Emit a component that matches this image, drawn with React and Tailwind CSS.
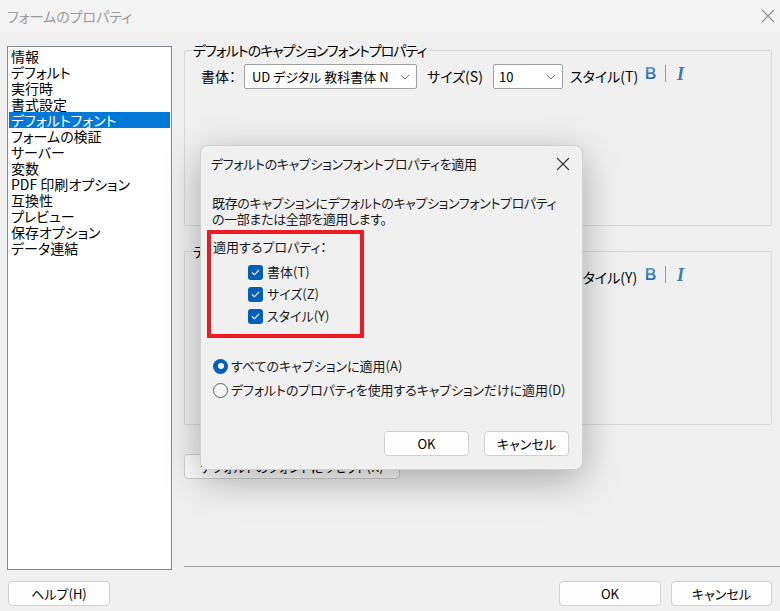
import React from "react";

const jp = { fontFamily: '"Noto Sans CJK JP", "Noto Sans", sans-serif', fontFeatureSettings: '"palt"' };

const listItems = [
  "情報",
  "デフォルト",
  "実行時",
  "書式設定",
  "デフォルトフォント",
  "フォームの検証",
  "サーバー",
  "変数",
  "PDF 印刷オプション",
  "互換性",
  "プレビュー",
  "保存オプション",
  "データ連結",
];

function Chevron() {
  return (
    <svg width="10" height="6" viewBox="0 0 10 6" className="shrink-0">
      <path d="M1 1l4 4 4-4" fill="none" stroke="#6b6b6b" strokeWidth="1" />
    </svg>
  );
}

function StyleButtons() {
  return (
    <div className="flex items-center -mt-[6px]">
      <span
        className="w-[13px] text-[16px] leading-none font-black bg-gradient-to-b from-[#5b9bd8] to-[#1f5fa8] bg-clip-text text-transparent"
        style={{ fontFamily: '"Liberation Sans", sans-serif' }}
      >
        B
      </span>
      <span className="ml-[7px] w-px h-[17px] bg-[#9a9a9a] shrink-0" />
      <span className="ml-[11px] text-[18px] leading-none font-bold italic text-[#3a78bd]" style={{ fontFamily: '"Liberation Serif", serif' }}>
        I
      </span>
    </div>
  );
}

function FontRow({ sizeLabel, styleLabel }) {
  return (
    <div className="flex items-center h-[25px] mt-[13px] pl-[16px] text-[14px] whitespace-nowrap">
      <span className="w-[43px] shrink-0">書体：</span>
      <div className="w-[173px] h-[25px] bg-white border border-[#a0a0a0] rounded-[2px] flex items-center justify-between pl-[7px] pr-[6px] shrink-0">
        <span className="text-[13px]">UD デジタル 教科書体 N</span>
        <Chevron />
      </div>
      <span className="ml-[10px] w-[66px] shrink-0">{sizeLabel}</span>
      <div className="w-[70px] h-[25px] bg-white border border-[#a0a0a0] rounded-[2px] flex items-center justify-between pl-[5px] pr-[6px] shrink-0">
        <span className="text-[13px]">10</span>
        <Chevron />
      </div>
      <span className="ml-[7px] w-[75px] shrink-0">{styleLabel}</span>
      <StyleButtons />
    </div>
  );
}

function GroupBox({ title, children, className }) {
  return (
    <div className={`relative border border-[#d9d9d9] rounded-[2px] mr-[8px] ${className}`}>
      <span className="absolute -top-[10px] left-[7px] px-[1px] bg-[#f0f0f0] text-[14px] leading-[18px] tracking-[-1px] whitespace-nowrap">
        {title}
      </span>
      {children}
    </div>
  );
}

function WinButton({ children, className = "" }) {
  return (
    <button className={`h-[25px] bg-[#fdfdfd] border border-[#d0d0d0] rounded-[4px] text-[13px] text-black flex items-center justify-center whitespace-nowrap ${className}`}>
      {children}
    </button>
  );
}

function CheckRow({ label }) {
  return (
    <div className="flex items-center h-[22px] pl-[37px]">
      <span className="w-[15px] h-[15px] rounded-[3px] bg-[#005fb8] flex items-center justify-center shrink-0">
        <svg width="9" height="7" viewBox="0 0 9 7">
          <path d="M1 3.5l2.4 2.3L8 1" fill="none" stroke="white" strokeWidth="1.1" />
        </svg>
      </span>
      <span className="ml-[4px]">{label}</span>
    </div>
  );
}

function ApplyDialog() {
  return (
    <div className="absolute left-[200px] top-[145px] w-[383px] h-[325px] rounded-[8px] bg-[#f0f0f0] border border-[#cfcfcf] shadow-[0_10px_40px_rgba(0,0,0,0.3)] text-[13px] text-[#1a1a1a] whitespace-nowrap">
      <div className="flex items-center justify-between h-[36px] pl-[10px] pr-[12px]">
        <span className="tracking-[-0.35px]">デフォルトのキャプションフォントプロパティを適用</span>
        <svg width="14" height="14" viewBox="0 0 14 14">
          <path d="M1 1l12 12M13 1L1 13" stroke="#333" strokeWidth="1.1" />
        </svg>
      </div>
      <div className="mt-[13px] pl-[11px] leading-[16px] tracking-[-0.35px]">
        <div>既存のキャプションにデフォルトのキャプションフォントプロパティ</div>
        <div>の一部または全部を適用します。</div>
      </div>
      <div className="ml-[6px] mt-[3px] w-[157px] h-[108px] border-[4px] border-[#ed1c24]">
        <div className="pl-[2px] mt-[2px] h-[22px] flex items-center">適用するプロパティ：</div>
        <div className="mt-[3px]">
          <CheckRow label="書体(T)" />
          <CheckRow label="サイズ(Z)" />
          <CheckRow label="スタイル(Y)" />
        </div>
      </div>
      <div className="mt-[16px] pl-[12px]">
        <div className="flex items-center h-[24px]">
          <span className="w-[15px] h-[15px] rounded-full bg-[#005fb8] flex items-center justify-center">
            <span className="w-[6px] h-[6px] rounded-full bg-white" />
          </span>
          <span className="ml-[3px]">すべてのキャプションに適用(A)</span>
        </div>
        <div className="flex items-center h-[24px]">
          <span className="w-[15px] h-[15px] rounded-full border border-[#5c5c5c] bg-[#f5f5f5]" />
          <span className="ml-[3px] tracking-[-0.1px]">デフォルトのプロパティを使用するキャプションだけに適用(D)</span>
        </div>
      </div>
      <div className="flex justify-end gap-[15px] pr-[13px] mt-[29px]">
        <WinButton className="w-[85px] border-[#005fb8]">OK</WinButton>
        <WinButton className="w-[85px]">キャンセル</WinButton>
      </div>
    </div>
  );
}

export default function App() {
  return (
    <div className="relative w-[780px] h-[611px] bg-[#f0f0f0] overflow-hidden text-black" style={jp}>
      <div className="h-[32px] bg-[#f3f3f3] flex items-center justify-between pl-[7px] pr-[5px]">
        <span className="text-[14px] text-[#9a9a9a]">フォームのプロパティ</span>
        <svg width="14" height="14" viewBox="0 0 14 14">
          <path d="M1 1l12 12M13 1L1 13" stroke="#8c8c8c" strokeWidth="1.1" />
        </svg>
      </div>
      <div className="flex h-[538px]">
        <div className="ml-[7px] mt-[14px] w-[165px] h-[524px] bg-white border border-[#828790] p-px text-[14px] leading-[16px]">
          {listItems.map((item, i) => (
            <div key={item} className={`h-[16px] pl-[2px] whitespace-nowrap ${i === 4 ? "bg-[#0078d7] text-white" : ""}`}>
              {item}
            </div>
          ))}
        </div>
        <div className="ml-[12px] flex-1 flex flex-col pt-[18px]">
          <GroupBox title="デフォルトのキャプションフォントプロパティ" className="h-[176px]">
            <FontRow sizeLabel="サイズ(S)" styleLabel="スタイル(T)" />
          </GroupBox>
          <GroupBox title="デフォルトのフィールドフォントプロパティ" className="h-[174px] mt-[25px]">
            <FontRow sizeLabel="サイズ(I)" styleLabel="スタイル(Y)" />
          </GroupBox>
          <div className="mt-[29px]">
            <WinButton className="w-[216px]">デフォルトのフォントにリセット(R)</WinButton>
          </div>
          <div className="mt-auto mb-[3px] h-px bg-[#a0a0a0]" />
        </div>
      </div>
      <div className="flex items-center mt-[11px] px-[8px]">
        <WinButton className="w-[102px]">ヘルプ(H)</WinButton>
        <WinButton className="w-[102px] ml-auto">OK</WinButton>
        <WinButton className="w-[101px] ml-[10px]">キャンセル</WinButton>
      </div>
      <ApplyDialog />
    </div>
  );
}
